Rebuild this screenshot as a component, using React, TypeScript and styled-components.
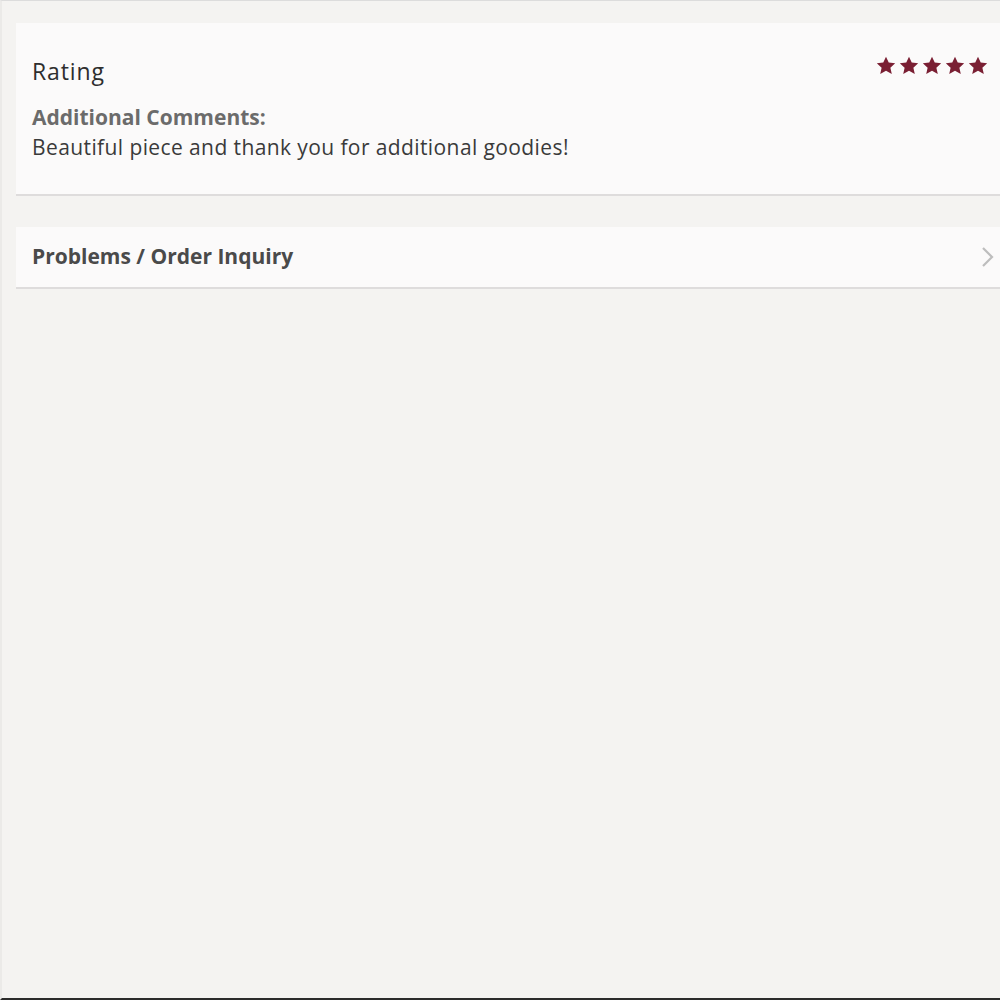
import React from "react";
import styled, { createGlobalStyle } from "styled-components";

const Global = createGlobalStyle`
  html, body { margin: 0; padding: 0; }
  body {
    background: #f4f3f1;
    font-family: "Open Sans", Lato, sans-serif;
  }
`;

const Page = styled.div`
  width: 1000px;
  height: 1000px;
  box-sizing: border-box;
  border-top: 1px solid #dcdcdc;
  border-left: 2px solid #ebeae8;
  border-bottom: 2px solid #2b2b2b;
  padding: 22px 0 0 14px;
  display: flex;
  flex-direction: column;
  gap: 31px;
  overflow: hidden;
`;

const Card = styled.section`
  background: #fbfafa;
  border-bottom: 2px solid #dedcdc;
`;

const RatingCard = styled(Card)`
  height: 173px;
  box-sizing: border-box;
  padding: 30px 12px 0 16px;
  position: relative;
`;

const Title = styled.h2`
  margin: 0;
  font-size: 23px;
  font-weight: 400;
  letter-spacing: 0.9px;
  color: #2e2e2e;
  line-height: 36px;
`;

const Label = styled.div`
  margin-top: 14px;
  font-size: 21px;
  font-weight: 700;
  color: #6b6b6b;
  line-height: 28px;
`;

const Comment = styled.p`
  margin: 2px 0 0;
  font-size: 21px;
  letter-spacing: 0.4px;
  color: #3a3a3a;
  line-height: 28px;
`;

const Stars = styled.div`
  position: absolute;
  top: 33px;
  right: 12px;
  display: flex;
  gap: 3px;
`;

const Row = styled.button`
  all: unset;
  height: 62px;
  box-sizing: border-box;
  padding: 0 6px 0 16px;
  display: flex;
  align-items: center;
  justify-content: space-between;
  background: #fbfafa;
  border-bottom: 2px solid #dedcdc;
`;

const RowLabel = styled.span`
  font-size: 21px;
  font-weight: 700;
  color: #4a4a4a;
  margin-top: -3px;
`;

const Star = () => (
  <svg width="20" height="19" viewBox="0 0 24 23">
    <path
      d="M12 0.8l3.3 7.2 7.8.8-5.8 5.3 1.7 7.7L12 17.8l-7 4 1.7-7.7L.9 8.8l7.8-.8z"
      fill="#7a1f33"
    />
  </svg>
);

const Chevron = () => (
  <svg width="14" height="22" viewBox="0 0 14 22">
    <path d="M3 2l9 9-9 9" fill="none" stroke="#bdbdbd" strokeWidth="2.2" />
  </svg>
);

export default function App() {
  return (
    <>
      <Global />
      <Page>
        <RatingCard>
          <Title>Rating</Title>
          <Stars>
            {[0, 1, 2, 3, 4].map((i) => (
              <Star key={i} />
            ))}
          </Stars>
          <Label>Additional Comments:</Label>
          <Comment>Beautiful piece and thank you for additional goodies!</Comment>
        </RatingCard>
        <Row>
          <RowLabel>Problems / Order Inquiry</RowLabel>
          <Chevron />
        </Row>
      </Page>
    </>
  );
}
